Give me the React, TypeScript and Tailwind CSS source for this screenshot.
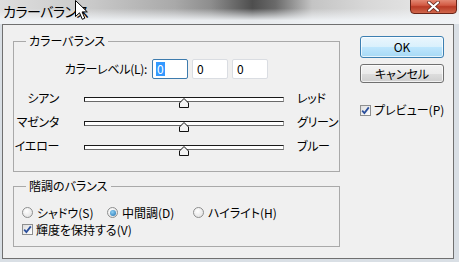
import React from "react";

const jp = "font-['Noto_Sans_CJK_JP',sans-serif] [font-feature-settings:'palt']";

const Slider = ({ left, right }: { left: string; right: string }) => (
  <div className="flex h-[24px]">
    <div className="flex w-[45px] shrink-0 justify-end">
      <span className="whitespace-nowrap text-[12px] leading-[14px] tracking-[-0.3px]">{left}</span>
    </div>
    <div className="relative ml-[25px] mt-[6px] h-[5px] w-[200px] shrink-0 border border-t-[#1a1a1a] border-l-[#1a1a1a] border-r-[#9a9a9a] border-b-[#6a6a6a] bg-white">
      <svg className="absolute left-[94px] top-[0px]" width="10" height="10" viewBox="0 0 10 10">
        <path d="M5 0.5 L9.5 5 V9.5 H0.5 V5 Z" fill="#f4f4f4" stroke="#111" strokeWidth="1" />
      </svg>
    </div>
    <span className="ml-[13px] whitespace-nowrap text-[12px] leading-[14px] tracking-[-0.3px]">{right}</span>
  </div>
);

const Radio = ({ label, checked, w }: { label: string; checked?: boolean; w: string }) => (
  <div className={`flex shrink-0 items-center ${w}`}>
    <div className="flex h-[11px] w-[11px] shrink-0 items-center justify-center rounded-full border border-[#8e8f8f] bg-[radial-gradient(circle_at_40%_35%,#ffffff,#dcdcdc)]">
      {checked && (
        <div className="h-[6px] w-[6px] rounded-full bg-[radial-gradient(circle_at_40%_35%,#8fd0f5,#1c6fae)]" />
      )}
    </div>
    <span className="ml-[4px] whitespace-nowrap text-[12px] leading-[14px]">{label}</span>
  </div>
);

const Check = ({ label }: { label: string }) => (
  <div className="flex items-center">
    <div className="flex h-[11px] w-[11px] shrink-0 items-center justify-center border border-[#8e8f8f] bg-[linear-gradient(135deg,#dedede,#ffffff)]">
      <svg width="9" height="9" viewBox="0 0 9 9">
        <path d="M1.2 4.6 L3.4 7 L7.8 1.4" fill="none" stroke="#2b4f9c" strokeWidth="1.8" />
      </svg>
    </div>
    <span className="ml-[3px] whitespace-nowrap text-[12px] leading-[14px]">{label}</span>
  </div>
);

export default function App() {
  return (
    <div className={`relative flex h-[262px] w-[459px] flex-col overflow-hidden bg-[#d9dfe5] text-black ${jp}`}>
      {/* title bar */}
      <div className="flex h-[24px] items-start bg-[linear-gradient(to_bottom,rgba(255,255,255,0)_35%,rgba(240,243,246,0.95)_85%),linear-gradient(to_right,#dedede,#c9c9c9_20%,#a9a9a9_38%,#8d8d8d_46%,#4e4e4e_55%,#6a6a6a_60%,#c4c4c4_68%,#d8d8d8_80%,#ececec)]">
        <span className="ml-[3px] mt-[3px] whitespace-nowrap text-[14px] leading-[16px] tracking-[-0.5px]">カラーバランス</span>
        <div className="ml-auto mr-[2px] mt-[-2px] flex h-[16px] w-[47px] items-center justify-center rounded-b-[4px] border border-[#6a2418] bg-[linear-gradient(to_bottom,#e6907c,#d25a43_45%,#b93a25_55%,#d0674c)]">
          <svg width="13" height="11" viewBox="0 0 13 11">
            <path d="M2 1.5 L11 9.5 M11 1.5 L2 9.5" stroke="#5a2217" strokeWidth="3.6" strokeLinecap="round" />
            <path d="M2 1.5 L11 9.5 M11 1.5 L2 9.5" stroke="#ffffff" strokeWidth="2.2" strokeLinecap="round" />
          </svg>
        </div>
      </div>

      {/* client area */}
      <div className="ml-[2px] flex h-[235px] w-[452px] border border-[#707070] bg-[#f0f0f0]">
        <div className="flex flex-col pl-[10px] pt-[9px]">
          <fieldset className="h-[138px] w-[327px] border border-[#a9a9a9] px-0">
            <legend className="ml-[12px] px-[3px] text-[12px] leading-[14px]">カラーバランス</legend>
            <div className="mt-[11px] flex items-center">
              <div className="flex w-[133px] shrink-0 justify-end">
                <span className="whitespace-nowrap text-[12px] leading-[14px] tracking-[-0.3px]">カラーレベル(L):</span>
              </div>
              <div className="ml-[5px] flex h-[20px] w-[36px] items-center rounded-[2px] border border-[#3d7bad] bg-white pl-[3px]">
                <span className="bg-[#3399ff] px-[1px] text-[12px] leading-[14px] text-white">0</span>
              </div>
              <div className="ml-[4px] flex h-[20px] w-[36px] items-center rounded-[2px] border border-[#dadde2] bg-white pl-[4px] text-[12px] leading-[14px]">0</div>
              <div className="ml-[4px] flex h-[20px] w-[36px] items-center rounded-[2px] border border-[#dadde2] bg-white pl-[4px] text-[12px] leading-[14px]">0</div>
            </div>
            <div className="mt-[12px] flex flex-col">
              <Slider left="シアン" right="レッド" />
              <Slider left="マゼンタ" right="グリーン" />
              <Slider left="イエロー" right="ブルー" />
            </div>
          </fieldset>

          <fieldset className="mt-[7px] h-[68px] w-[327px] border border-[#a9a9a9] px-0">
            <legend className="ml-[12px] px-[3px] text-[12px] leading-[14px]">階調のバランス</legend>
            <div className="ml-[8px] mt-[11px] flex h-[17px] items-center">
              <Radio label="シャドウ(S)" w="w-[85px]" />
              <Radio label="中間調(D)" checked w="w-[86px]" />
              <Radio label="ハイライト(H)" w="w-[90px]" />
            </div>
            <div className="ml-[8px] flex h-[17px] items-center">
              <Check label="輝度を保持する(V)" />
            </div>
          </fieldset>
        </div>

        <div className="ml-[20px] flex flex-col pt-[11px]">
          <div className="flex h-[22px] w-[84px] items-center justify-center rounded-[3px] border border-[#3c7fb1] bg-[linear-gradient(to_bottom,#eaf6fd,#d9f0fc_50%,#bee6fd_51%,#a7d9f5)] text-[12px] leading-[14px] shadow-[inset_0_0_0_1px_rgba(255,255,255,0.7)]">
            OK
          </div>
          <div className="mt-[6px] flex h-[19px] w-[84px] items-center justify-center rounded-[3px] border border-[#707070] bg-[linear-gradient(to_bottom,#f2f2f2,#ebebeb_50%,#dddddd_51%,#cfcfcf)] text-[12px] leading-[14px] shadow-[inset_0_0_0_1px_rgba(255,255,255,0.7)]">
            キャンセル
          </div>
          <div className="mt-[20px]">
            <Check label="プレビュー(P)" />
          </div>
        </div>
      </div>

      {/* mouse cursor */}
      <svg className="absolute left-[75px] top-[0px]" width="14" height="22" viewBox="0 0 14 22">
        <path d="M0.5 0.5 L0.5 16.5 L4.5 12.8 L7.3 19.3 L9.8 18.2 L7.1 11.9 L12.3 11.9 Z" fill="#ffffff" stroke="#000000" strokeWidth="1" strokeLinejoin="round" />
      </svg>
    </div>
  );
}
